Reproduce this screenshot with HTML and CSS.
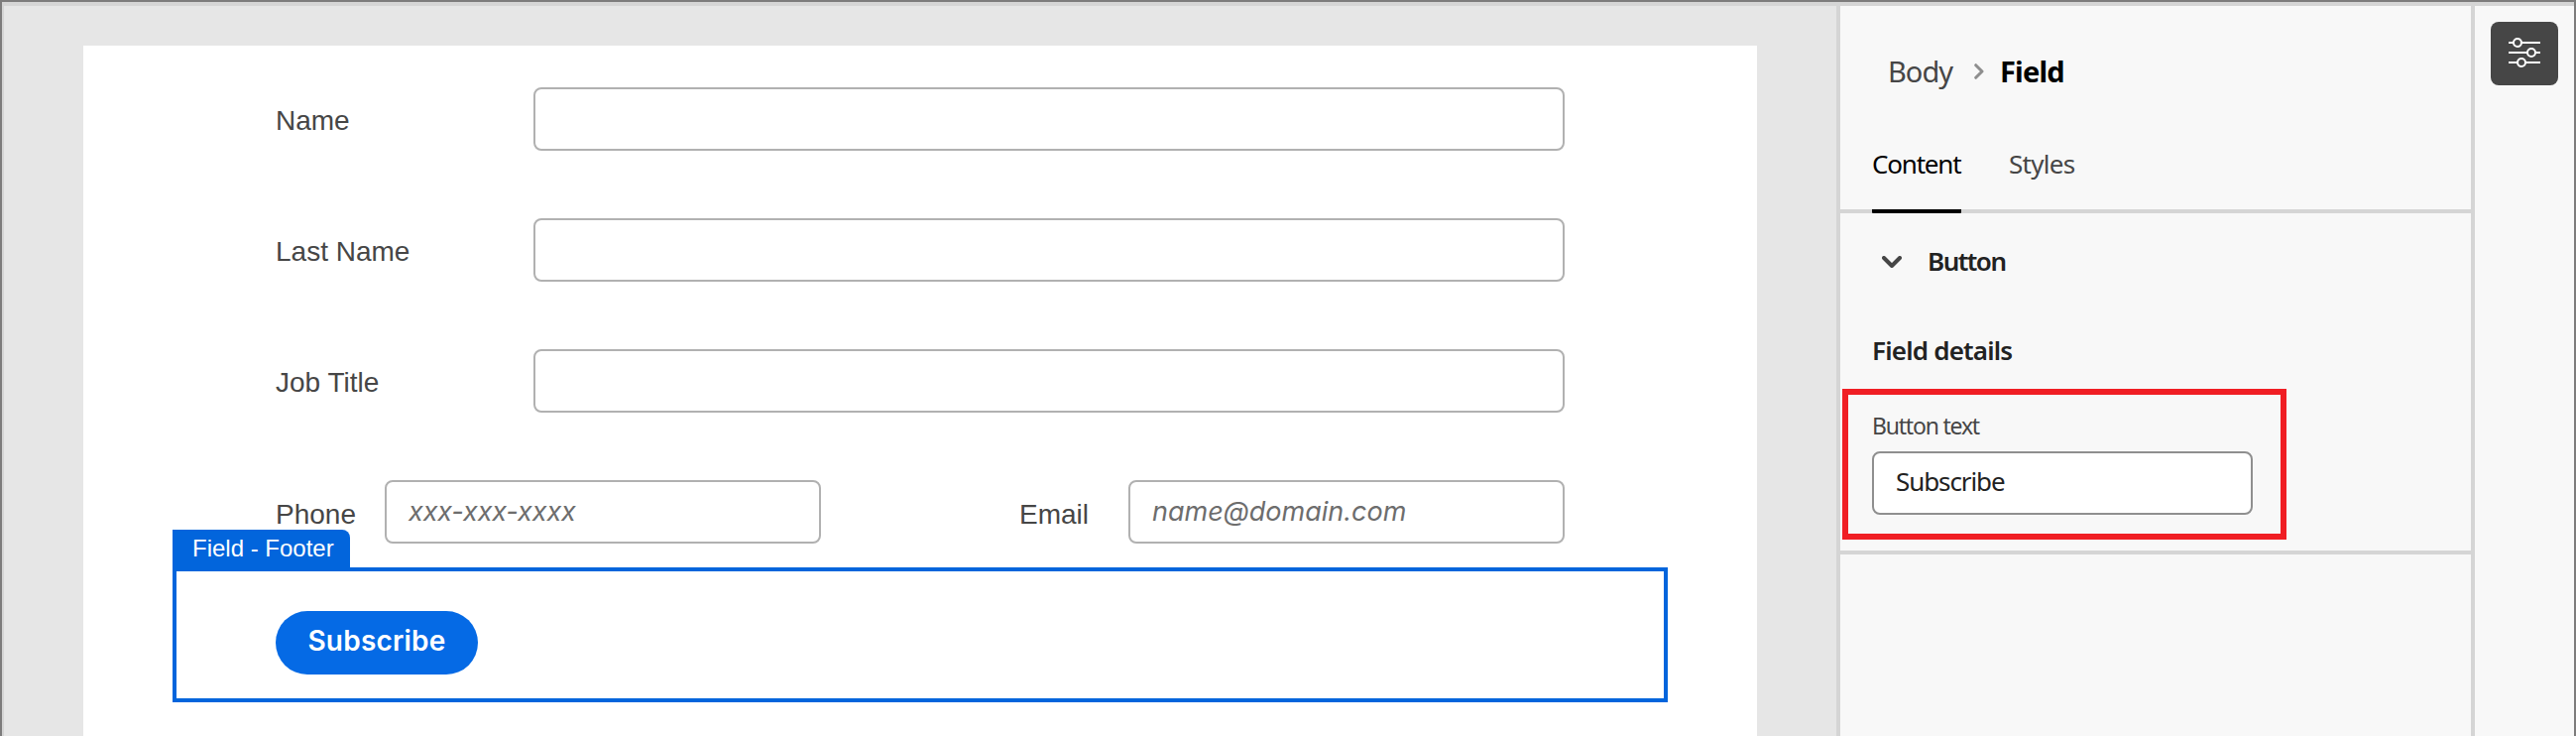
FILE: index.html
```html
<!DOCTYPE html>
<html lang="en">
<head>
<meta charset="utf-8">
<title>Form editor</title>
<link rel="stylesheet" href="styles.css">
</head>
<body>
<div class="app">
  <main class="canvas">
    <form class="sheet">
      <div class="row"><label class="label wide">Name</label><div class="input grow"></div></div>
      <div class="row"><label class="label wide">Last Name</label><div class="input grow"></div></div>
      <div class="row"><label class="label wide">Job Title</label><div class="input grow"></div></div>
      <div class="row">
        <label class="label phone">Phone</label><div class="input half"><span class="hint hint-phone">xxx-xxx-xxxx</span></div>
        <label class="label email">Email</label><div class="input half"><span class="hint hint-email">name@domain.com</span></div>
      </div>
      <div class="selected">
        <div class="tag"><span class="tag-text">Field - Footer</span></div>
        <div class="submit"><span class="submit-text">Subscribe</span></div>
      </div>
    </form>
  </main>
  <aside class="panel">
    <header class="head">
      <nav class="crumbs">
        <span class="crumb">Body</span>
        <svg class="crumb-arrow" viewBox="0 0 10 16"><path d="M1.700 1.700L8 8l-6.300 6.300" fill="none" stroke="#8e8e8e" stroke-width="3" stroke-linecap="round" stroke-linejoin="round"/></svg>
        <span class="crumb-current">Field</span>
      </nav>
      <div class="tabs">
        <div class="tab active"><span class="tab-content">Content</span></div>
        <div class="tab"><span class="tab-styles">Styles</span></div>
      </div>
    </header>
    <section class="section">
      <div class="section-title">
        <svg class="chevron" viewBox="0 0 20 12"><path d="M2 2l8 8 8-8" fill="none" stroke="#464646" stroke-width="4" stroke-linecap="round" stroke-linejoin="round"/></svg>
        <span class="section-name">Button</span>
      </div>
      <div class="subhead"><span class="subhead-text">Field details</span></div>
      <div class="callout">
        <div class="field-label"><span class="field-label-text">Button text</span></div>
        <div class="text-input"><span class="text-value">Subscribe</span></div>
      </div>
    </section>
  </aside>
  <div class="rail">
    <div class="tool">
      <svg class="tool-icon" viewBox="0 0 32 32"><g fill="none" stroke="#fff" stroke-width="2"><path d="M0 6h5M13 6h19M0 16h19M27 16h5M0 26h9M17 26h15"/><circle cx="9" cy="6" r="4"/><circle cx="23" cy="16" r="4"/><circle cx="13" cy="26" r="4"/></g></svg>
    </div>
  </div>
</div>
</body>
</html>
```
FILE: styles.css
```css
* { box-sizing: border-box; }
body { margin: 0; font-family: "Noto Sans", sans-serif; }
span { white-space: nowrap; }
.app { display: flex; width: 2598px; height: 742px; overflow: hidden; border: 2px solid #7d7c7c; border-bottom: 0; background: #f8f8f8; }
.canvas { width: 1850px; border-top: 4px solid #d5d5d5; border-left: 2px solid #d5d5d5; background: #e6e6e6; padding: 40px 0 0 80px; }
.sheet { width: 1688px; height: 696px; background: #fff; padding: 42px 90px 0; }
.row { display: flex; align-items: center; height: 64px; margin: 0 104px 68px; }
.label { font: 28px "Liberation Sans", sans-serif; color: #464646; padding-top: 4px; }
.wide { width: 260px; }
.phone { width: 110px; padding-top: 5px; }
.email { width: 110px; margin-left: 200px; padding-top: 5px; }
.input { height: 64px; border: 2px solid #b1b1b1; border-radius: 8px; background: #fff; display: flex; align-items: center; padding: 0 22px; }
.grow { flex: 1; }
.half { width: 440px; }
.hint { font: italic 27px Inter, sans-serif; color: #6d6d6d; padding-bottom: 2px; }
.hint-phone { letter-spacing: -.1px; }
.hint-email { letter-spacing: 0; }
.selected { position: relative; height: 136px; margin-top: -44px; border: 4px solid #0265dc; padding: 40px 100px; }
.tag { position: absolute; left: -4px; top: -42px; width: 179px; height: 42px; background: #0265dc; border-radius: 0 8px 0 0; color: #fff; font: 24px/38px "Liberation Sans", sans-serif; padding-left: 20px; }
.submit { width: 204px; height: 64px; border-radius: 32px; background: #056ae5; color: #fff; font: 600 28px/61px Inter, sans-serif; letter-spacing: .200px; text-align: center; }
.panel { width: 640px; border: 4px solid #d5d5d5; border-width: 4px 0 0 4px; }
.head { height: 209px; border-bottom: 4px solid #d5d5d5; padding-left: 32px; }
.crumbs { display: flex; align-items: center; height: 132px; padding-left: 16px; font-size: 29px; color: #464646; }
.crumb { width: 87px; margin-top: -2px; letter-spacing: -1px; }
.crumb-arrow { width: 10px; height: 16px; }
.crumb-current { margin: -2px 0 0 16px; font-weight: 700; color: #000; letter-spacing: -.8px; }
.tabs { display: flex; gap: 48px; height: 77px; font-size: 26px; line-height: 54px; color: #464646; }
.tab { height: 77px; }
.active { width: 90px; border-bottom: 4px solid #000; border-radius: 1px; color: #000; }
.tab-content { letter-spacing: -1.2px; }
.tab-styles { letter-spacing: -.7px; }
.section { height: 344px; border-bottom: 4px solid #d5d5d5; }
.section-title { display: flex; align-items: center; height: 98px; padding-left: 42px; font-size: 26px; font-weight: 600; color: #222; }
.chevron { width: 20px; height: 12px; margin-right: 26px; }
.section-name { margin-top: -2px; letter-spacing: -1.5px; }
.subhead-text { letter-spacing: -.8px; }
.subhead { height: 79px; padding-left: 32px; font-size: 26px; font-weight: 600; line-height: 80px; color: #222; }
.callout { width: 448px; height: 152px; margin-left: 2px; border: 6px solid #f01e24; padding: 15px 28px 19px 24px; }
.field-label { height: 42px; font-size: 23px; line-height: 33px; color: #464646; letter-spacing: -1.200px; }
.text-input { width: 384px; height: 64px; border: 2px solid #8f8f8f; border-radius: 8px; background: #fff; padding-left: 22px; font-size: 26px; line-height: 57px; color: #222; letter-spacing: -1.1px; }
.rail { width: 104px; border: 4px solid #d5d5d5; border-width: 4px 0 0 4px; padding: 16px; }
.tool { width: 68px; height: 64px; border-radius: 8px; background: #464646; padding: 15px 18px; }
.tool-icon { display: block; width: 32px; height: 32px; }
```
